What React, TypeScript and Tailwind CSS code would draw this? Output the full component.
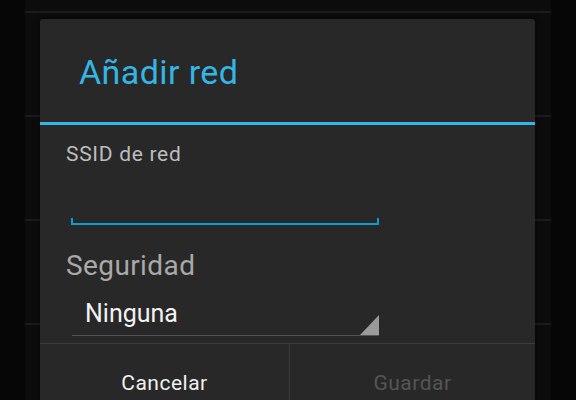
export default function App() {
  const rows = [0, 1, 2, 3]

  return (
    <div className="relative w-[576px] h-[400px] overflow-hidden bg-[#060606] font-['Roboto',sans-serif]">
      {/* list behind the dialog */}
      <div className="mx-[25px] h-full bg-[#0c0c0c] pt-[11px]">
        {rows.map((r) => (
          <div key={r} className="h-[104px] border-t-2 border-[#1c1c1c]" />
        ))}
      </div>

      {/* dialog */}
      <div className="absolute left-[40px] top-[19px] w-[495px] bg-[#282828] rounded-t-[3px] shadow-[0_0_6px_rgba(0,0,0,0.6)]">
        <div className="h-[103px] pl-[39px] pt-[33px]">
          <h1 className="text-[34px] leading-[40px] tracking-[0.4px] text-[#33b5e5]">Añadir red</h1>
        </div>
        <div className="h-[3px] bg-[#33b5e5]" />

        <div className="pt-[17px]">
          <div className="pl-[26px] text-[21px] leading-[24px] tracking-[0.7px] text-[#bdbdbd]">SSID de red</div>

          <div className="ml-[31px] mt-[52px] w-[308px] h-[7px] border-x-2 border-b-2 border-[#0c9bd3]" />

          <div className="pl-[26px] mt-[25px] text-[28px] leading-[32px] tracking-[0.4px] text-[#a9a9a9]">Seguridad</div>

          <div className="relative ml-[32px] mt-[18px] w-[307px] border-b border-[#555555] pb-[7px]">
            <div className="pl-[13px] text-[25px] leading-[28px] text-[#f2f2f2]">Ninguna</div>
            <svg className="absolute right-0 bottom-0" width="19" height="20" viewBox="0 0 19 20">
              <polygon points="19,0 19,20 0,20" fill="#9a9a9a" />
            </svg>
          </div>
        </div>

        <div className="mt-[7px] grid grid-cols-[249px_1fr] border-t border-[#3c3c3c]">
          <div className="h-[72px] pt-[27px] text-center text-[21px] leading-[24px] tracking-[0.5px] text-[#f0f0f0]">Cancelar</div>
          <div className="h-[72px] pt-[27px] text-center text-[21px] leading-[24px] tracking-[0.5px] text-[#555555] border-l border-[#3c3c3c]">
            Guardar
          </div>
        </div>
      </div>
    </div>
  )
}
